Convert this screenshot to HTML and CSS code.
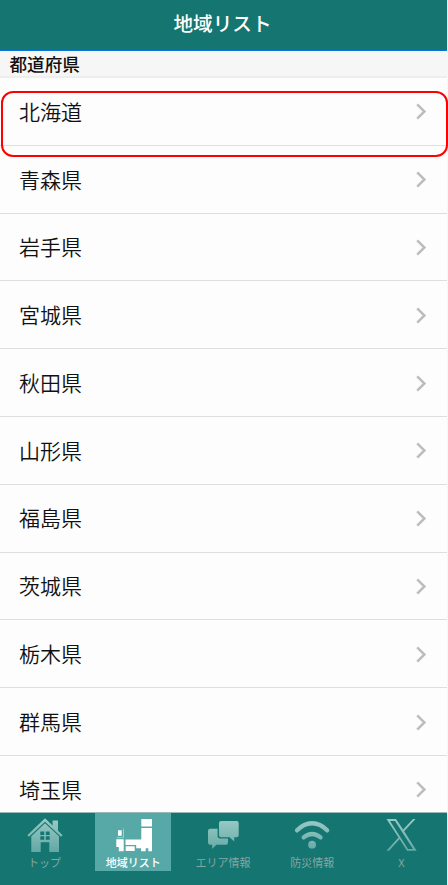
FILE: index.html
```html
<!DOCTYPE html>
<html lang="ja">
<head>
<meta charset="utf-8">
<title>地域リスト</title>
<link rel="stylesheet" href="styles.css">
</head>
<body>
<div class="app">
  <div class="highlight"></div>
  <header class="header">地域リスト</header>
  <h2 class="section">都道府県</h2>
  <main class="list">
    <div class="row"><span>北海道</span><svg class="chevron" viewBox="0 0 12 18"><path d="M2.2 2.4 9.4 9.5 2.2 16.6"/></svg></div>
    <div class="row"><span>青森県</span><svg class="chevron" viewBox="0 0 12 18"><path d="M2.2 2.4 9.4 9.5 2.2 16.6"/></svg></div>
    <div class="row"><span>岩手県</span><svg class="chevron" viewBox="0 0 12 18"><path d="M2.2 2.4 9.4 9.5 2.2 16.6"/></svg></div>
    <div class="row"><span>宮城県</span><svg class="chevron" viewBox="0 0 12 18"><path d="M2.2 2.4 9.4 9.5 2.2 16.6"/></svg></div>
    <div class="row"><span>秋田県</span><svg class="chevron" viewBox="0 0 12 18"><path d="M2.2 2.4 9.4 9.5 2.2 16.6"/></svg></div>
    <div class="row"><span>山形県</span><svg class="chevron" viewBox="0 0 12 18"><path d="M2.2 2.4 9.4 9.5 2.2 16.6"/></svg></div>
    <div class="row"><span>福島県</span><svg class="chevron" viewBox="0 0 12 18"><path d="M2.2 2.4 9.4 9.5 2.2 16.6"/></svg></div>
    <div class="row"><span>茨城県</span><svg class="chevron" viewBox="0 0 12 18"><path d="M2.2 2.4 9.4 9.5 2.2 16.6"/></svg></div>
    <div class="row"><span>栃木県</span><svg class="chevron" viewBox="0 0 12 18"><path d="M2.2 2.4 9.4 9.5 2.2 16.6"/></svg></div>
    <div class="row"><span>群馬県</span><svg class="chevron" viewBox="0 0 12 18"><path d="M2.2 2.4 9.4 9.5 2.2 16.6"/></svg></div>
    <div class="row"><span>埼玉県</span><svg class="chevron" viewBox="0 0 12 18"><path d="M2.2 2.4 9.4 9.5 2.2 16.6"/></svg></div>
  </main>
  <nav class="tabs">
    <div class="tab">
      <svg class="icon" viewBox="0 0 40 40">
        <defs><linearGradient id="fade" gradientUnits="userSpaceOnUse" x1="0" y1="2" x2="0" y2="37"><stop offset="0" stop-color="#9ccbc7"/><stop offset="1" stop-color="#61a7a2"/></linearGradient></defs>
        <g fill="url(#fade)">
          <path d="M20 2.3 27.6 9.5V4.6H33V14.8L37.7 19.2 36 20.8 20 5.8 4 20.8 2.3 19.2Z"/>
          <path fill-rule="evenodd" d="M20 7.2 34 20.3V36H24.3V26.2H15.7V36H6.3V20.3ZM15.3 15.5V19H19.2V15.5ZM20.8 15.5V19H24.7V15.5ZM15.3 20.3V23.7H19.2V20.3ZM20.8 20.3V23.7H24.7V20.3Z"/>
        </g>
      </svg>
      <span>トップ</span>
    </div>
    <div class="tab active">
      <svg class="icon" viewBox="0 0 40 40">
        <g fill="#fff">
          <path d="M28.3 3H39V10.5H28.3ZM28.3 12H39V35.3H35.3V32.3H32.7V35.3H28V32.3H23.2V29H12.5V23.5H28.3ZM12.7 30.3H21.7V35H12.7ZM3.3 23.3H10.7V35.3H5.8V31H3.3ZM5 14.2H8.7V19.8H5Z"/>
        </g>
        <path d="M3.8 21.7H10.5V12.5" fill="none" stroke="#b8dddc" stroke-width=".7"/>
      </svg>
      <span>地域リスト</span>
    </div>
    <div class="tab">
      <svg class="icon" viewBox="0 0 40 40" fill="url(#fade)">
        <path d="M18 5H33.8Q35.7 5 35.7 7V19.2Q35.7 21.2 33.8 21.2H31.2V25.4L26.5 21.2H18Q16 21.2 16 19.2V7Q16 5 18 5Z"/>
        <path d="M7 12.8H14.6V20.5Q14.6 22.6 17 22.6H25V26.5Q25 28.7 23 28.7H13.3L9.2 33V28.7H7Q5 28.7 5 26.5V15Q5 12.8 7 12.8Z"/>
      </svg>
      <span>エリア情報</span>
    </div>
    <div class="tab">
      <svg class="icon" viewBox="-0.6 0 40 40" fill="none" stroke="url(#fade)" stroke-width="4.4" stroke-linecap="round">
        <path d="M4.5 14.3Q11.3 7.2 19.5 7.2T34.5 14.3M11.1 21.4Q15.3 18 19.5 18T27.9 21.4"/>
        <circle cx="19.5" cy="28.7" r="3.9" fill="url(#fade)" stroke="none"/>
      </svg>
      <span>防災情報</span>
    </div>
    <div class="tab">
      <svg class="icon" viewBox="-0.8 0 40 40" fill="url(#fade)">
        <path fill-rule="evenodd" d="M4.7 3H14.2L21.3 13.6 31.2 3H33.7L22.4 15.2 34.8 34.8H25.2L17.8 23 7.2 34.8H4.7L16.7 21.4ZM8.2 4.9 26.2 32.9H31.2L13.2 4.9Z"/>
      </svg>
      <span>X</span>
    </div>
  </nav>
</div>
</body>
</html>
```

FILE: styles.css
```css
* { box-sizing: border-box; }
body {
  margin: 0;
  overflow: hidden;
  background: #f4f8f8;
  font-family: "Noto Sans CJK JP", sans-serif;
  color: #111;
}
.app {
  position: relative;
  width: 447px;
  height: 885px;
  display: flex;
  flex-direction: column;
  background: #fdfdfd;
}
.header {
  flex: none;
  height: 51px;
  padding-right: 2px;
  border-bottom: 1px solid #0875dc;
  background: #147571;
  color: #fff;
  font-size: 19.6px;
  font-weight: 500;
  line-height: 45px;
  text-align: center;
}
.section {
  flex: none;
  height: 27px;
  margin: 0;
  padding-left: 9.5px;
  border-bottom: 2px solid #eeeeee;
  background: #f6f6f6;
  font-size: 17.6px;
  font-weight: 500;
  line-height: 25px;
}
.list {
  flex: 1;
  min-height: 0;
  overflow: hidden;
}
.row {
  display: flex;
  align-items: center;
  justify-content: space-between;
  height: 67.8px;
  padding: 0 20px 0 19px;
  border-bottom: 1px solid #dedede;
  font-size: 21px;
  font-weight: 350;
}
.row span {
  padding-bottom: 1.4px;
}
.chevron {
  width: 12px;
  height: 18px;
  fill: none;
  stroke: #bdbdbd;
  stroke-width: 2.5;
}
.highlight {
  position: absolute;
  z-index: 1;
  top: 91px;
  left: 1px;
  width: 447px;
  height: 66px;
  border: 2px solid #f00;
  border-radius: 12px;
}
.tabs {
  flex: none;
  display: flex;
  justify-content: space-around;
  height: 73px;
  padding-right: 1px;
  border-top: 1px solid #9cb9b7;
  background: #147571;
}
.tab {
  display: flex;
  flex-direction: column;
  align-items: center;
  width: 76px;
  height: 58px;
  padding-top: 3px;
  color: #87a6a3;
  font-size: 11px;
  line-height: 12px;
}
.active {
  margin: 0 0.6px 0 -0.6px;
  background: #57a9a8;
  color: #fff;
  font-weight: 500;
}
.icon {
  flex: none;
  width: 40px;
  height: 40px;
}
```
